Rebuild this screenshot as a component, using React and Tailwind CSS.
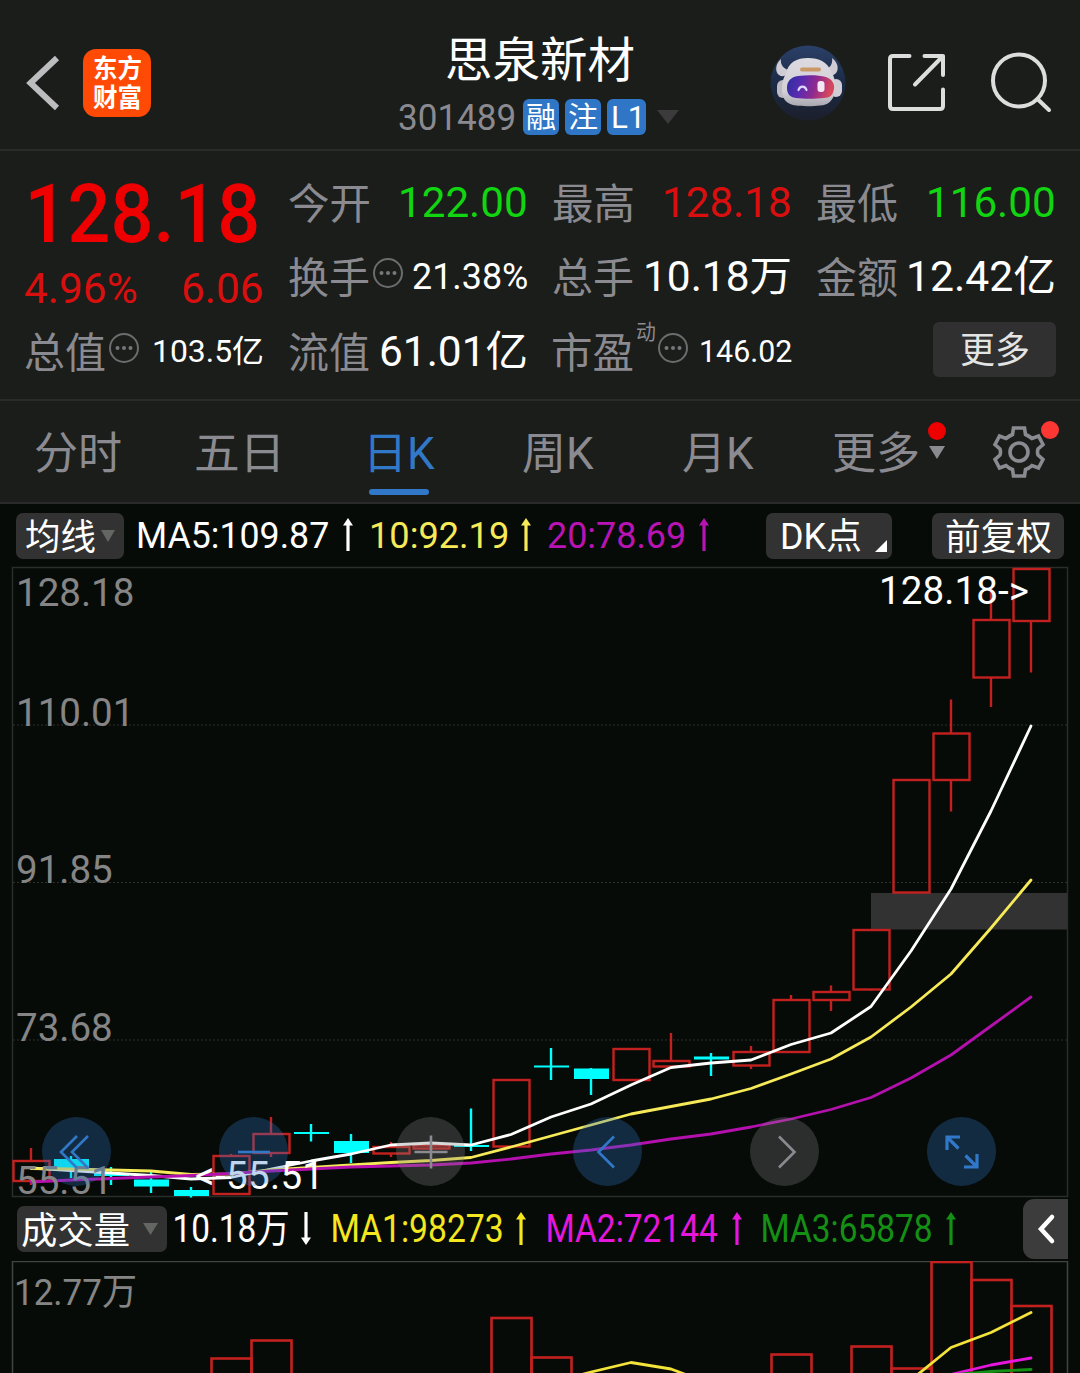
import React, { useLayoutEffect, useRef, useState } from 'react';

// Stretches a line of text so that its ink fills the width of the box
const Fit = ({ children, className = '' }) => {
  const outer = useRef(null);
  const inner = useRef(null);
  const [transform, setTransform] = useState('none');

  useLayoutEffect(() => {
    const cs = getComputedStyle(inner.current);
    const ctx = document.createElement('canvas').getContext('2d');
    ctx.font = `${cs.fontWeight} ${cs.fontSize} ${cs.fontFamily}`;
    const m = ctx.measureText(inner.current.textContent);
    const ink = m.actualBoundingBoxLeft + m.actualBoundingBoxRight;
    const s = outer.current.clientWidth / ink;
    setTransform(`translateX(${m.actualBoundingBoxLeft * s}px) scaleX(${s})`);
  }, [children]);

  return (
    <div ref={outer} className={`shrink-0 leading-none ${className}`}>
      <span ref={inner} className="block w-max origin-left whitespace-nowrap" style={{ transform }}>
        {children}
      </span>
    </div>
  );
};

const Info = ({ className = '' }) => (
  <svg className={`h-[30px] w-[30px] shrink-0 ${className}`} viewBox="0 0 30 30" fill="none">
    <circle cx="15" cy="15" r="14" stroke="#6c6c6e" strokeWidth="2" />
    <circle cx="8.5" cy="15" r="2" fill="#77777a" />
    <circle cx="15" cy="15" r="2" fill="#77777a" />
    <circle cx="21.5" cy="15" r="2" fill="#77777a" />
  </svg>
);

const Down = ({ className = '' }) => (
  <svg className={`shrink-0 ${className}`} viewBox="0 0 20 12" preserveAspectRatio="none">
    <path d="M0 0H20L10 12Z" fill="currentColor" />
  </svg>
);

const Arrow = ({ className = '' }) => (
  <svg className={`-mt-[2px] h-[33px] w-[10px] shrink-0 ${className}`} viewBox="0 0 10 33">
    <path d="M5 0L10 7.500H6.600V33H3.400V7.500H0Z" fill="currentColor" />
  </svg>
);

const Robot = () => (
  <svg className="h-[76px] w-[76px]" viewBox="0 0 76 76">
    <defs>
      <linearGradient id="sky" x1="0" y1="0" x2="0" y2="1">
        <stop offset="0" stopColor="#2b4069" />
        <stop offset="0.5" stopColor="#1b2b46" />
        <stop offset="1" stopColor="#1c1f2c" />
      </linearGradient>
      <linearGradient id="shell" x1="0" y1="0" x2="0" y2="1">
        <stop offset="0" stopColor="#dcdae0" />
        <stop offset="0.7" stopColor="#d2cfd6" />
        <stop offset="1" stopColor="#a9a7b0" />
      </linearGradient>
      <linearGradient id="visor" x1="0" y1="0" x2="1" y2="0.15">
        <stop offset="0" stopColor="#2b2f9e" />
        <stop offset="0.35" stopColor="#5a2bb0" />
        <stop offset="0.65" stopColor="#8f2a8f" />
        <stop offset="1" stopColor="#d8485c" />
      </linearGradient>
    </defs>
    <circle cx="38" cy="38" r="37.5" fill="url(#sky)" />
    <path d="M11 14C5 19 5 27 9 30C13 33 18 30 21 25C14 25 10 20 11 14Z" fill="#cfccd4" />
    <path d="M62 13C69 18 69 26 65 29C61 32 57 29 54 24C60 24 63 19 62 13Z" fill="#cfccd4" />
    <rect x="7" y="35" width="12" height="18" rx="6" fill="#bdbac3" />
    <rect x="60" y="34" width="12" height="18" rx="6" fill="#d0cdd5" />
    <path d="M16 29C18 17 27 13 38 13C49 13 58 17 61 27C65 32 66 39 65 47C63 56 58 60 50 60.500C42 61.500 30 61.500 23 60C15 58 12 52 12 45C12 38 13 33 16 29Z" fill="url(#shell)" />
    <rect x="30" y="22.500" width="21" height="4" rx="2" fill="#c99a68" />
    <path d="M28 31C38 29.500 49 30 56 32C62 34 65 39 64 44C63 50 60 53 54 53C45 54 34 54 26 53C19 52 17 48 17 43C17 36 21 32 28 31Z" fill="url(#visor)" />
    <path d="M28.500 45C30 40.500 35 40.500 36.500 45" fill="none" stroke="#dcd9ff" strokeWidth="2.200" strokeLinecap="round" />
    <rect x="47.500" y="36" width="7" height="11" rx="3" fill="#f3e6f5" />
  </svg>
);

const Header = () => (
  <header className="flex h-[151px] items-start border-b-2 border-[#2a2a2b]">
    <svg className="ml-[25px] mt-[54px] h-[58px] w-[36px]" viewBox="0 0 36 58" fill="none">
      <path d="M32 4L5.500 29L32 54" stroke="#bdbdbf" strokeWidth="6" />
    </svg>
    <div className="ml-[22px] mt-[49px] flex h-[68px] w-[68px] flex-col items-center justify-center gap-[3px] rounded-[13px] bg-[#ff4a05] font-bold text-white">
      <Fit className="w-[47px] text-[26px]">东方</Fit>
      <Fit className="w-[48px] text-[26px]">财富</Fit>
    </div>
    <div className="ml-[246px] mt-[37px] flex w-[284px] flex-col">
      <Fit className="ml-[50px] w-[187px] text-[48px] text-white">思泉新材</Fit>
      <div className="mt-[14px] flex h-[36px] items-center">
        <Fit className="ml-[2px] w-[115px] pt-px text-[36px] text-[#8b8a90]">301489</Fit>
        <div className="ml-[9px] flex gap-[6px] text-white">
          <div className="flex h-[36px] w-[36px] items-center justify-center rounded-[6px] bg-[#2f76c6]">
            <Fit className="w-[28px] pt-[3px] text-[29px]">融</Fit>
          </div>
          <div className="flex h-[36px] w-[36px] items-center justify-center rounded-[6px] bg-[#2f76c6]">
            <Fit className="w-[28px] pt-[3px] text-[29px]">注</Fit>
          </div>
          <div className="flex h-[36px] w-[39px] items-center justify-center rounded-[6px] bg-[#2f76c6]">
            <Fit className="w-[27px] text-[31px]">L1</Fit>
          </div>
        </div>
        <Down className="ml-[11px] h-[14px] w-[22px] text-[#3c3a3c]" />
      </div>
    </div>
    <div className="ml-[89px] mt-[45px]">
      <Robot />
    </div>
    <svg className="ml-[40px] mt-[51px] h-[62px] w-[62px]" viewBox="0 0 62 62" fill="none" stroke="#dddddd" strokeWidth="4" strokeLinecap="round" strokeLinejoin="round">
      <path d="M23.500 5H7Q4 5 4 8V55Q4 58 7 58H54Q57 58 57 55V38.500" />
      <path d="M38.500 5H57V24M57 5L29 33.500" />
    </svg>
    <svg className="ml-[41px] mt-[50px] h-[64px] w-[64px] shrink-0" viewBox="0 0 64 64" fill="none" stroke="#dddddd" strokeWidth="4" strokeLinecap="round">
      <circle cx="30" cy="30.500" r="26" />
      <path d="M48.500 49L60 60" />
    </svg>
  </header>
);

const Cell = ({ children }) => (
  <div className="flex h-[74.5px] items-center justify-between">{children}</div>
);

const Label = ({ children }) => <Fit className="w-[80px] pt-[5px] text-[42px] text-[#8b8a90]">{children}</Fit>;

const Quote = () => (
  <section className="flex h-[250px] gap-[26px] border-b-2 border-[#2a2a2b] pl-[25px] pt-[14px] text-white">
    <div className="w-[238px]">
      <div className="flex h-[98px] items-center">
        <Fit className="ml-[5px] w-[227px] text-[82px] font-medium text-[#ee0000]">128.18</Fit>
      </div>
      <div className="flex h-[51px] items-center justify-between text-[42px] text-[#d90f0f]">
        <Fit className="w-[111px] pt-px">4.96%</Fit>
        <Fit className="mr-px w-[79px] pt-px">6.06</Fit>
      </div>
      <Cell>
        <div className="flex items-center">
          <Label>总值</Label>
          <Info className="ml-[4px] -mt-[6px]" />
        </div>
        <Fit className="w-[109px] text-[31px]">103.5亿</Fit>
      </Cell>
    </div>
    <div className="w-[238px]">
      <Cell>
        <Label>今开</Label>
        <Fit className="mr-px w-[125px] pt-px text-[42px] text-[#12d512]">122.00</Fit>
      </Cell>
      <Cell>
        <div className="flex items-center">
          <Label>换手</Label>
          <Info className="ml-[4px] -mt-[8px]" />
        </div>
        <Fit className="w-[114px] text-[36px]">21.38%</Fit>
      </Cell>
      <Cell>
        <Label>流值</Label>
        <Fit className="mr-px w-[145px] pt-[2px] text-[42px]">61.01亿</Fit>
      </Cell>
    </div>
    <div className="w-[238px]">
      <Cell>
        <Label>最高</Label>
        <Fit className="mr-px w-[125px] pt-px text-[42px] text-[#d90f0f]">128.18</Fit>
      </Cell>
      <Cell>
        <Label>总手</Label>
        <Fit className="mr-px w-[144px] pt-px text-[42px]">10.18万</Fit>
      </Cell>
      <Cell>
        <div className="flex items-center">
          <Label>市盈</Label>
          <Fit className="ml-[4px] -mt-[37px] w-[18px] text-[21px] text-[#8b8a90]">动</Fit>
          <Info className="ml-[3px] -mt-[6px]" />
        </div>
        <Fit className="-mr-px w-[91px] text-[31px]">146.02</Fit>
      </Cell>
    </div>
    <div className="w-[238px]">
      <Cell>
        <Label>最低</Label>
        <Fit className="mr-px w-[125px] pt-px text-[42px] text-[#12d512]">116.00</Fit>
      </Cell>
      <Cell>
        <Label>金额</Label>
        <Fit className="mr-px w-[145px] pt-px text-[42px]">12.42亿</Fit>
      </Cell>
      <div className="-mr-px flex h-[70px] items-center justify-end">
        <div className="flex h-[55px] w-[123px] items-center justify-center rounded-[6px] bg-[#303030] text-[#e4e4e4]">
          <Fit className="w-[67px] pt-[4px] text-[36px]">更多</Fit>
        </div>
      </div>
    </div>
  </section>
);

const tabs = [
  { name: '分时', box: 'ml-[35px] w-[86px]' },
  { name: '五日', box: 'ml-[75px] w-[82px]' },
  { name: '日K', box: 'ml-[92px] w-[65px]', active: true },
  { name: '周K', box: 'ml-[88px] w-[71px]' },
  { name: '月K', box: 'ml-[89px] w-[71px]' },
  { name: '更多', box: 'ml-[80px] w-[84px]' },
];

const Tabs = () => (
  <nav className="flex h-[103px] items-center border-b-2 border-[#2a2a2b] text-[44px] text-[#8b8a90]">
    {tabs.map((t) => (
      <div key={t.name} className={t.active ? 'relative pt-[5px] text-[#3278c8]' : 'pt-[5px]'}>
        <Fit className={t.box}>{t.name}</Fit>
        {t.active && <div className="absolute -bottom-[18.5px] left-[91px] h-[6px] w-[60px] rounded-full bg-[#3278c8]" />}
      </div>
    ))}
    <div className="ml-[9px] flex w-[20px] flex-col items-center gap-[6px] pb-[23px]">
      <div className="h-[18px] w-[18px] rounded-full bg-[#ee0000]" />
      <Down className="h-[13px] w-[16px]" />
    </div>
    <div className="relative ml-[45px]">
      <svg className="h-[54px] w-[54px]" viewBox="0 0 54 54" fill="none" stroke="currentColor" strokeWidth="3.600">
        <path d="M21.500 3H32.500L33.500 9.500Q37 11 40 13.500L46.500 11L51 19.500L46 24Q45 27 46 30L51 34.500L46.500 43L40 40.500Q37 43.500 33.500 44.500L32.500 51H21.500L20.500 44.500Q17 43.500 14 40.500L7.500 43L3 34.500L8 30Q9 27 8 24L3 19.500L7.500 11L14 13.500Q17 11 20.500 9.500Z" />
        <circle cx="27" cy="27" r="9" />
      </svg>
      <div className="absolute -top-[4px] left-[49px] h-[18px] w-[18px] rounded-full bg-[#fb3733]" />
    </div>
  </nav>
);

const MaBar = () => (
  <div className="flex h-[63px] items-center text-[36px] text-white">
    <div className="ml-[16px] flex h-[46px] w-[108px] items-center rounded-[7px] bg-[#323232] pl-[10px]">
      <Fit className="w-[69px] pt-[4px]">均线</Fit>
      <Down className="ml-[6px] h-[12px] w-[14px] text-[#636663]" />
    </div>
    <Fit className="ml-[14px] w-[190px] pt-px">MA5:109.87</Fit>
    <Arrow className="ml-[15px]" />
    <div className="ml-[19px] flex items-center text-[#f6ea58]">
      <Fit className="w-[135px] pt-px">10:92.19</Fit>
      <Arrow className="ml-[14px]" />
    </div>
    <div className="ml-[17px] flex items-center text-[#b914b3]">
      <Fit className="w-[136px] pt-px">20:78.69</Fit>
      <Arrow className="ml-[15px]" />
    </div>
    <div className="ml-[57px] flex h-[46px] w-[126px] items-center rounded-[7px] bg-[#323232] pl-[16px]">
      <Fit className="w-[79px] pt-[2px]">DK点</Fit>
      <svg className="ml-[14px] mt-[20px] h-[12px] w-[12px]" viewBox="0 0 12 12">
        <path d="M12 0V12H0Z" fill="#ffffff" />
      </svg>
    </div>
    <div className="ml-[40px] flex h-[46px] w-[132px] items-center justify-center rounded-[7px] bg-[#323232]">
      <Fit className="w-[105px] pt-[4px]">前复权</Fit>
    </div>
  </div>
);

// [up, body top, body bottom, high, low], pixels down the page
const candles = [
  [1, 1161, 1181, 1148, 1185],
  [0, 1159, 1170.5, 1156, 1178],
  [0, 1173, 1176, 1167, 1185],
  [0, 1179.5, 1186.5, 1172, 1193],
  [0, 1190, 1196, 1187, 1197.5],
  [1, 1156, 1194, 1154, 1195],
  [1, 1134, 1153, 1117, 1157],
  [0, 1132, 1134, 1124, 1141.5],
  [0, 1141, 1153, 1134, 1163],
  [1, 1147, 1153.5, 1142, 1157],
  [1, 1145.5, 1148.5, 1144, 1150],
  [0, 1145, 1147, 1108.5, 1151],
  [1, 1080, 1146.5, 1080, 1146.5],
  [0, 1065.5, 1067.5, 1048, 1080],
  [0, 1068.5, 1079, 1068, 1095],
  [1, 1049, 1080, 1049, 1080],
  [1, 1061, 1066.5, 1033, 1066.5],
  [0, 1056.5, 1059.5, 1053, 1076],
  [1, 1052, 1065.5, 1046, 1069],
  [1, 1000, 1052, 995, 1053],
  [1, 992, 1000, 985.5, 1011],
  [1, 930, 989.5, 930, 990.5],
  [1, 780, 892.5, 780, 892.5],
  [1, 733.5, 780, 699.5, 811.5],
  [1, 620, 677.5, 590, 707],
  [1, 569, 621, 569, 672.5],
];

const ma5 = [1168, 1170.5, 1173, 1175.5, 1179, 1177.5, 1169, 1161, 1154, 1145, 1143, 1145, 1134.5, 1117, 1104, 1085, 1067.5, 1063, 1060, 1044.5, 1033, 1006.5, 951, 889, 811, 726];
const ma10 = [1168.5, 1169, 1170, 1171, 1174.5, 1174, 1170, 1167.5, 1165, 1162.5, 1160.5, 1157.5, 1147, 1136, 1125, 1114, 1106.5, 1099, 1088.5, 1074, 1059, 1037, 1007, 974, 928, 880];
const ma20 = [1182, 1180, 1178.5, 1177, 1175.5, 1173.5, 1171, 1169, 1167, 1166, 1165, 1163, 1159, 1154, 1150, 1145, 1139, 1134, 1127, 1119, 1109.5, 1097.5, 1078, 1055, 1026, 997];

const line = (ys) => ys.map((y, i) => `${31 + i * 40},${y}`).join(' ');

const axis = [
  ['128.18', 605.5],
  ['110.01', 725.5],
  ['91.85', 882.5],
  ['73.68', 1040.5],
  ['55.51', 1193.5],
];

const RoundButton = ({ blue, children }) => (
  <div className={`flex h-[69px] w-[69px] items-center justify-center rounded-full ${blue ? 'bg-[#2f76c8]/30 text-[#3278c8]' : 'bg-[#828282]/30 text-[#8b8a90]'}`}>
    <svg className="h-[40px] w-[40px]" viewBox="-20 -20 40 40" fill="none" stroke="currentColor" strokeWidth="2.600">
      {children}
    </svg>
  </div>
);

const KChart = () => (
  <div className="relative h-[630px]">
    <svg className="block h-[630px] w-full overflow-visible" viewBox="0 567 1080 630" fill="none">
      <rect x="12.500" y="567.500" width="1055" height="629" stroke="#2b2d2b" strokeWidth="1.500" />
      {[725, 882.5, 1040].map((y) => (
        <line key={y} x1="13" x2="1067" y1={y} y2={y} stroke="#2e302e" strokeWidth="1.200" strokeDasharray="2 2" />
      ))}
      <rect x="871" y="893" width="196" height="36.500" fill="#323232" />
      {candles.map(([up, top, bottom, high, low], i) => {
        const x = 31 + i * 40;
        return up ? (
          <g key={x} stroke="#c3211f" strokeWidth="2.400">
            <path d={`M${x} ${high}V${top}M${x} ${bottom}V${low}`} />
            <rect x={x - 17.5} y={top} width="36" height={bottom - top} />
          </g>
        ) : (
          <g key={x} fill="#00ffff">
            <rect x={x - 1.2} y={high} width="2.400" height={low - high} />
            <rect x={x - 17} y={top} width="35" height={bottom - top} />
          </g>
        );
      })}
      <g strokeWidth="2.800" strokeLinejoin="round" strokeLinecap="round">
        <polyline points={line(ma5)} stroke="#ffffff" />
        <polyline points={line(ma10)} stroke="#f6ea58" />
        <polyline points={line(ma20)} stroke="#b410ae" />
      </g>
      <g className="font-['Roboto',sans-serif] text-[38.5px]" fill="#858585">
        {axis.map(([t, y]) => (
          <text key={t} x="16" y={y}>{t}</text>
        ))}
        <text x="879" y="603.500" fill="#ffffff" textLength="150">128.18-&gt;</text>
        <text x="195" y="1189" fill="#ffffff" textLength="129">&lt;-55.51</text>
      </g>
    </svg>
    <div className="absolute left-[42px] top-[550px] flex gap-[108px]">
      <RoundButton blue>
        <path d="M0 -16L-16 0L0 16M11 -16L-5 0L11 16" />
      </RoundButton>
      <RoundButton blue>
        <path d="M-16 0H16" />
      </RoundButton>
      <RoundButton>
        <path d="M-16.500 0H16.500M0 -16.500V16.500" />
      </RoundButton>
      <RoundButton blue>
        <path d="M6 -15.500L-9.500 0L6 15.500" />
      </RoundButton>
      <RoundButton>
        <path d="M-6 -15.500L9.500 0L-6 15.500" />
      </RoundButton>
      <RoundButton blue>
        <path d="M-15 -2V-15H-2M-15 -15L-3.500 -3.500M15 2V15H2M15 15L3.500 3.500" strokeWidth="3.200" />
      </RoundButton>
    </div>
  </div>
);

const VolBar = () => (
  <div className="flex h-[64px] items-center text-[39px] text-white">
    <div className="ml-[17px] flex h-[46px] w-[150px] items-center rounded-[7px] bg-[#323232] pl-[5px]">
      <Fit className="w-[107px] pt-[4px] text-[37px]">成交量</Fit>
      <Down className="ml-[14px] h-[12px] w-[15px] text-[#636663]" />
    </div>
    <Fit className="ml-[8px] w-[113px] pt-px">10.18万</Fit>
    <Arrow className="ml-[13px] rotate-180" />
    <div className="ml-[22px] flex items-center text-[#f4e71f]">
      <Fit className="w-[169px] pt-px">MA1:98273</Fit>
      <Arrow className="ml-[14px]" />
    </div>
    <div className="ml-[22px] flex items-center text-[#e616dc]">
      <Fit className="w-[170px] pt-px">MA2:72144</Fit>
      <Arrow className="ml-[14px]" />
    </div>
    <div className="ml-[21px] flex items-center text-[#149014]">
      <Fit className="w-[168px] pt-px">MA3:65878</Fit>
      <Arrow className="ml-[15px]" />
    </div>
    <div className="ml-[67px] flex h-[60px] w-[45px] items-center justify-center rounded-l-[11px] bg-[#3c3c3c]">
      <svg className="h-[32px] w-[20px]" viewBox="0 0 20 32" fill="none">
        <path d="M16 4L5 16L16 28" stroke="#ffffff" strokeWidth="4.500" strokeLinecap="round" />
      </svg>
    </div>
  </div>
);

const bars = [[211, 1358.5], [251, 1340.5], [491, 1318], [531, 1357.5], [771, 1354.5], [851, 1346.5], [891, 1368.5], [931, 1262], [971, 1280], [1011, 1306]];

const VolChart = () => (
  <svg className="block h-[112px] w-full" viewBox="0 1261 1080 112" fill="none">
    <path d="M12.500 1380V1261.500H1067.500V1380" stroke="#424442" strokeWidth="1.500" />
    {bars.map(([x, y]) => (
      <rect key={x} x={x + 0.5} y={y} width="40" height="140" stroke="#c3211f" strokeWidth="2.600" />
    ))}
    <g strokeWidth="2.800" strokeLinecap="round" strokeLinejoin="round">
      <polyline points="951,1374.500 991,1365 1031,1358" stroke="#e616dc" />
      <polyline points="951,1375 991,1371.500 1031,1369.500" stroke="#149014" />
      <polyline points="551,1383 591,1372 631,1362.500 671,1369 711,1384" stroke="#f4e33a" />
      <polyline points="911,1380 951,1347.500 991,1332.500 1031,1312.500" stroke="#f4e33a" />
    </g>
    <text x="14" y="1304.500" className="font-['Roboto','Noto_Sans_CJK_SC',sans-serif] text-[37px]" fill="#858585" textLength="123" lengthAdjust="spacingAndGlyphs">
      12.77万
    </text>
  </svg>
);

const App = () => {
  return (
    <div lang="zh-CN" className="h-[1373px] w-[1080px] overflow-hidden bg-[#070b08] font-['Roboto','Noto_Sans_CJK_SC',sans-serif]">
      <div className="bg-[#1a1d1a]">
        <Header />
        <Quote />
        <Tabs />
      </div>
      <MaBar />
      <KChart />
      <VolBar />
      <VolChart />
    </div>
  );
};

export default App;
